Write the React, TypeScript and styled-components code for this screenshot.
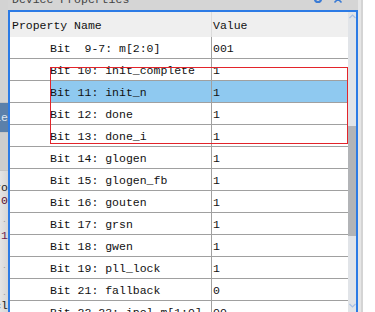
import styled, { createGlobalStyle } from "styled-components";

const GlobalStyle = createGlobalStyle`
  body {
    margin: 0;
    overflow: hidden;
    background: #ffffff;
  }
`;

const mono = `"Liberation Mono", "Courier New", monospace`;

const Screen = styled.div`
  display: flex;
  width: 375px;
  height: 312px;
  overflow: hidden;
  font-family: ${mono};
  font-size: 11.5px;
  color: #111;
`;

const BackStrip = styled.div`
  width: 8px;
  flex-shrink: 0;
  display: flex;
  flex-direction: column;
  background: #d2d2d2;
  overflow: hidden;
`;

const StripBlock = styled.div<{ $h: number; $bg: string; $color?: string }>`
  height: ${({ $h }) => $h}px;
  flex-shrink: 0;
  background: ${({ $bg }) => $bg};
  color: ${({ $color }) => $color || "#222"};
  display: flex;
  align-items: center;
  justify-content: flex-end;
  white-space: nowrap;
  overflow: hidden;
  border-bottom: 1px solid #c4c4c4;
  box-sizing: border-box;
`;

const StripList = styled.div`
  flex: 1;
  display: flex;
  flex-direction: column;
  padding-top: 10px;
  background: linear-gradient(90deg, #e4e4e4, #d6d6d6);
`;

const StripItem = styled.div<{ $h: number; $color: string; $dots?: boolean }>`
  height: ${({ $h }) => $h}px;
  flex-shrink: 0;
  display: flex;
  align-items: ${({ $dots }) => ($dots ? "flex-end" : "center")};
  justify-content: ${({ $dots }) => ($dots ? "flex-start" : "flex-end")};
  white-space: nowrap;
  overflow: hidden;
  color: ${({ $color }) => $color};
  font-size: ${({ $dots }) => ($dots ? 8 : 11.5)}px;
  line-height: ${({ $dots }) => ($dots ? "6px" : "normal")};
  letter-spacing: ${({ $dots }) => ($dots ? 1 : 0)}px;
  padding-left: ${({ $dots }) => ($dots ? 2 : 0)}px;
`;

const Panel = styled.div`
  width: 350px;
  flex-shrink: 0;
  display: flex;
  flex-direction: column;
`;

const TitleBar = styled.div`
  height: 10px;
  flex-shrink: 0;
  background: #d5d5d5;
  display: flex;
  align-items: flex-end;
  overflow: hidden;
  padding-left: 4px;
  color: #444;
`;

const TitleText = styled.span`
  flex: 1;
  line-height: 13px;
  margin-bottom: 4px;
`;

const TitleIcon = styled.svg<{ $gap: number }>`
  width: 10px;
  height: 10px;
  margin-bottom: 6px;
  margin-right: ${({ $gap }) => $gap}px;
  flex-shrink: 0;
`;

const Frame = styled.div`
  flex: 1;
  display: flex;
  border: 2px solid #2c7be5;
  border-bottom: none;
  min-height: 0;
`;

const TableArea = styled.div`
  position: relative;
  width: 338px;
  flex-shrink: 0;
  display: flex;
  flex-direction: column;
  overflow: hidden;
`;

const HeaderRow = styled.div`
  display: grid;
  grid-template-columns: 202px 1fr;
  height: 25px;
  flex-shrink: 0;
  background: #efefef;
`;

const HeaderCell = styled.div<{ $first?: boolean }>`
  box-sizing: border-box;
  padding: 2px 0 0 ${({ $first }) => ($first ? 2 : 1)}px;
  line-height: 23px;
  white-space: pre;
  border-right: ${({ $first }) => ($first ? "1px solid #dcdcdc" : "none")};
`;

const Row = styled.div<{ $selected?: boolean }>`
  display: grid;
  grid-template-columns: 202px 1fr;
  height: 22px;
  flex-shrink: 0;
  box-sizing: border-box;
  border-bottom: 1px solid #a0a0a0;
  background: ${({ $selected }) => ($selected ? "#8fc9f0" : "#ffffff")};
`;

const NameCell = styled.div`
  box-sizing: border-box;
  padding: 2px 0 0 40px;
  line-height: 19px;
  white-space: pre;
  overflow: hidden;
  border-right: 1px solid #a0a0a0;
`;

const ValueCell = styled.div`
  padding: 2px 0 0 1px;
  line-height: 19px;
  white-space: pre;
`;

const DragGhost = styled.div`
  position: absolute;
  left: 40px;
  top: 55px;
  width: 298px;
  height: 77px;
  box-sizing: border-box;
  border: 1px solid #e3242b;
  background: #ffffff;
  overflow: hidden;
`;

const GhostRows = styled.div`
  width: 338px;
  margin: -9px 0 0 -41px;
  display: flex;
  flex-direction: column;
`;

const ScrollTrack = styled.div`
  width: 8px;
  flex-shrink: 0;
  display: flex;
  flex-direction: column;
  align-items: center;
  background: #e1e4e8;
`;

const Arrow = styled.svg<{ $bottom?: boolean }>`
  width: 7px;
  height: 5px;
  flex-shrink: 0;
  margin-top: ${({ $bottom }) => ($bottom ? "auto" : "2px")};
  margin-bottom: ${({ $bottom }) => ($bottom ? "4px" : "0")};
`;

const Thumb = styled.div`
  width: 8px;
  flex-shrink: 0;
  background: #b2b4b7;
`;

const RightEdge = styled.div`
  flex: 1;
  display: flex;
`;

const EdgeBand = styled.div<{ $w: number; $bg: string }>`
  width: ${({ $w }) => $w}px;
  flex-shrink: 0;
  background: ${({ $bg }) => $bg};
`;

type Prop = { name: string; value: string };

const props: Prop[] = [
  { name: "Bit  9-7: m[2:0]", value: "001" },
  { name: "Bit 10: init_complete", value: "1" },
  { name: "Bit 11: init_n", value: "1" },
  { name: "Bit 12: done", value: "1" },
  { name: "Bit 13: done_i", value: "1" },
  { name: "Bit 14: glogen", value: "1" },
  { name: "Bit 15: glogen_fb", value: "1" },
  { name: "Bit 16: gouten", value: "1" },
  { name: "Bit 17: grsn", value: "1" },
  { name: "Bit 18: gwen", value: "1" },
  { name: "Bit 19: pll_lock", value: "1" },
  { name: "Bit 21: fallback", value: "0" },
  { name: "Bit 22-23: ipol_m[1:0]", value: "00" },
];

// rows being dragged (Bit 10..13), Bit 11 selected
const dragged = props.slice(1, 5);

// the window behind the panel, only its right edge shows
const backItems = [
  { text: "ro", h: 12, color: "#222" },
  { text: "0", h: 14, color: "#5a1030" },
  { text: "..", h: 16, color: "#9a9a9a", dots: true },
  { text: "1", h: 24, color: "#6a1a50" },
  { text: "..", h: 22, color: "#9a9a9a", dots: true },
  { text: "..", h: 27, color: "#9a9a9a", dots: true },
  { text: "cl", h: 18, color: "#222" },
];

export default function App() {
  const thumbTop = 107;
  const thumbHeight = 110;

  return (
    <>
      <GlobalStyle />
      <Screen>
        <BackStrip>
          <StripBlock $h={103} $bg="#d3d3d3" />
          <StripBlock $h={30} $bg="#5b80aa" $color="#dfe7f0">
            le
          </StripBlock>
          <StripBlock $h={38} $bg="#cdcdcd" />
          <StripList>
            {backItems.map((it, i) => (
              <StripItem key={i} $h={it.h} $color={it.color} $dots={it.dots}>
                {it.text}
              </StripItem>
            ))}
          </StripList>
        </BackStrip>

        <Panel>
          <TitleBar>
            <TitleText>Device Properties</TitleText>
            <TitleIcon $gap={10} viewBox="0 0 10 10">
              <path d="M2 5a3 3 0 1 0 6 0a3 3 0 1 0 -6 0" fill="none" stroke="#3a7bd5" strokeWidth="2.2" />
            </TitleIcon>
            <TitleIcon $gap={15} viewBox="0 0 10 10">
              <path d="M1.5 1.5L8.5 8.5M8.5 1.5L1.5 8.5" stroke="#3a7bd5" strokeWidth="1.6" />
            </TitleIcon>
          </TitleBar>

          <Frame>
            <TableArea>
              <HeaderRow>
                <HeaderCell $first>Property Name</HeaderCell>
                <HeaderCell>Value</HeaderCell>
              </HeaderRow>
              {props.map((p) => (
                <Row key={p.name}>
                  <NameCell>{p.name}</NameCell>
                  <ValueCell>{p.value}</ValueCell>
                </Row>
              ))}

              <DragGhost>
                <GhostRows>
                  {dragged.map((p) => (
                    <Row key={p.name} $selected={p.name === "Bit 11: init_n"}>
                      <NameCell>{p.name}</NameCell>
                      <ValueCell>{p.value}</ValueCell>
                    </Row>
                  ))}
                </GhostRows>
              </DragGhost>
            </TableArea>

            <ScrollTrack>
              <Arrow viewBox="0 0 7 5">
                <path d="M0.5 4L3.5 1L6.5 4" fill="none" stroke="#a8c0e4" strokeWidth="1.2" />
              </Arrow>
              <Thumb style={{ marginTop: thumbTop, height: thumbHeight }} />
              <Arrow $bottom viewBox="0 0 7 5">
                <path d="M0.5 1L3.5 4L6.5 1" fill="none" stroke="#a8c0e4" strokeWidth="1.2" />
              </Arrow>
            </ScrollTrack>
          </Frame>
        </Panel>

        <RightEdge>
          <EdgeBand $w={3} $bg="#e6e6e6" />
          <EdgeBand $w={2} $bg="#d4d4d4" />
          <EdgeBand $w={12} $bg="#ffffff" />
        </RightEdge>
      </Screen>
    </>
  );
}
